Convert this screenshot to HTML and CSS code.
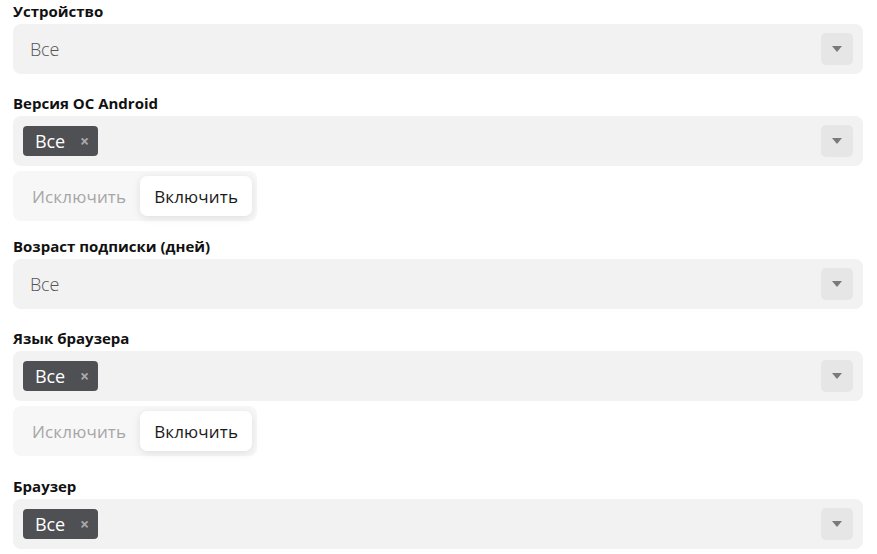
FILE: index.html
```html
<!DOCTYPE html>
<html lang="ru">
<head>
<meta charset="utf-8">
<link rel="stylesheet" href="styles.css">
</head>
<body>
<div class="form">
  <div class="field">
    <div class="label">Устройство</div>
    <div class="select">
      <span class="placeholder">Все</span>
      <span class="arrow"><svg width="10" height="6" viewBox="0 0 10 6"><path d="M0 0H10L5 6Z" fill="#7a7a7a"/></svg></span>
    </div>
  </div>
  <div class="field field--tight">
    <div class="label">Версия ОС Android</div>
    <div class="select">
      <span class="tag">Все<span class="tag-x">×</span></span>
      <span class="arrow"><svg width="10" height="6" viewBox="0 0 10 6"><path d="M0 0H10L5 6Z" fill="#7a7a7a"/></svg></span>
    </div>
    <div class="toggle">
      <span class="toggle-opt">Исключить</span>
      <span class="toggle-opt toggle-opt--active">Включить</span>
    </div>
  </div>
  <div class="field">
    <div class="label">Возраст подписки (дней)</div>
    <div class="select">
      <span class="placeholder">Все</span>
      <span class="arrow"><svg width="10" height="6" viewBox="0 0 10 6"><path d="M0 0H10L5 6Z" fill="#7a7a7a"/></svg></span>
    </div>
  </div>
  <div class="field field--loose">
    <div class="label">Язык браузера</div>
    <div class="select">
      <span class="tag">Все<span class="tag-x">×</span></span>
      <span class="arrow"><svg width="10" height="6" viewBox="0 0 10 6"><path d="M0 0H10L5 6Z" fill="#7a7a7a"/></svg></span>
    </div>
    <div class="toggle">
      <span class="toggle-opt">Исключить</span>
      <span class="toggle-opt toggle-opt--active">Включить</span>
    </div>
  </div>
  <div class="field">
    <div class="label">Браузер</div>
    <div class="select">
      <span class="tag">Все<span class="tag-x">×</span></span>
      <span class="arrow"><svg width="10" height="6" viewBox="0 0 10 6"><path d="M0 0H10L5 6Z" fill="#7a7a7a"/></svg></span>
    </div>
  </div>
</div>
</body>
</html>
```
FILE: styles.css
```css
html, body {
  margin: 0;
  padding: 0;
  background: #fff;
}
body {
  font-family: "Open Sans", "Noto Sans", sans-serif;
  color: #111;
}
.form {
  padding: 3px 14px 0 13px;
  display: flex;
  flex-direction: column;
}
.field {
  display: flex;
  flex-direction: column;
  margin-bottom: 21px;
}
.field--tight {
  margin-bottom: 17px;
}
.field--loose {
  margin-bottom: 22px;
}
.label {
  font-size: 15px;
  font-weight: 700;
  line-height: 17px;
  margin-bottom: 4px;
  color: #111;
}
.select {
  height: 50px;
  box-sizing: border-box;
  background: #f2f2f2;
  border-radius: 8px;
  display: flex;
  align-items: center;
  padding: 0 10px 0 10px;
}
.placeholder {
  font-size: 18px;
  font-weight: 300;
  color: #555;
  padding-left: 7px;
  letter-spacing: -0.2px;
}
.arrow {
  margin-left: auto;
  width: 32px;
  height: 32px;
  background: #e6e6e6;
  border-radius: 5px;
  display: flex;
  align-items: center;
  justify-content: center;
}
.tag {
  height: 30px;
  width: 75px;
  box-sizing: border-box;
  background: #4f5054;
  border-radius: 4px;
  color: #fff;
  font-size: 18px;
  font-weight: 400;
  display: flex;
  align-items: center;
  padding-left: 12px;
  letter-spacing: -0.1px;
}
.tag-x {
  margin-left: auto;
  margin-right: 9px;
  font-size: 16px;
  font-weight: 700;
  color: #a9a9a9;
}
.toggle {
  align-self: flex-start;
  margin-top: 5px;
  background: #f7f7f7;
  border-radius: 8px;
  padding: 5px;
  display: flex;
  align-items: center;
}
.toggle-opt {
  height: 40px;
  display: flex;
  align-items: center;
  padding: 0 14px;
  font-size: 17px;
  letter-spacing: 0.15px;
  color: #a6a6a6;
  border-radius: 7px;
}
.toggle-opt--active {
  background: #fff;
  color: #1a1a1a;
  box-shadow: 0 2px 8px rgba(0, 0, 0, 0.10);
}
```
